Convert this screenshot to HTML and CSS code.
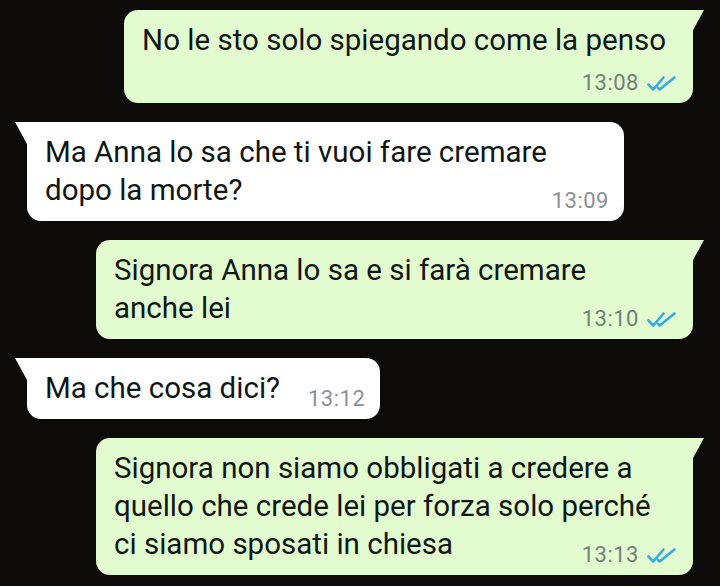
FILE: index.html
```html
<!DOCTYPE html>
<html lang="it">
<head>
    <meta charset="UTF-8">
    <meta name="viewport" content="width=device-width, initial-scale=1.0">
    <title>Chat</title>
    <link rel="stylesheet" href="styles.css">
</head>
<body>
    <div class="chat">
        <div class="bubble out">
            <p class="text">No le sto solo spiegando come la penso</p>
            <div class="meta meta-row">
                <span class="time">13:08</span>
                <svg class="ticks" viewBox="0 0 32 17"><path d="M2.5 9.5l4.8 5L17.5 2.5M12 13l1.6 1.5L28.5 2.5"/></svg>
            </div>
        </div>

        <div class="bubble in">
            <p class="text">Ma Anna lo sa che ti vuoi fare cremare dopo la morte?<span class="meta"><span class="time">13:09</span></span></p>
        </div>

        <div class="bubble out">
            <p class="text">Signora Anna lo sa e si farà cremare anche lei<span class="meta"><span class="time">13:10</span><svg class="ticks" viewBox="0 0 32 17"><path d="M2.5 9.5l4.8 5L17.5 2.5M12 13l1.6 1.5L28.5 2.5"/></svg></span></p>
        </div>

        <div class="bubble in">
            <p class="text">Ma che cosa dici?<span class="meta"><span class="time">13:12</span></span></p>
        </div>

        <div class="bubble out">
            <p class="text">Signora non siamo obbligati a credere a quello che crede lei per forza solo perché ci siamo sposati in chiesa<span class="meta"><span class="time">13:13</span><svg class="ticks" viewBox="0 0 32 17"><path d="M2.5 9.5l4.8 5L17.5 2.5M12 13l1.6 1.5L28.5 2.5"/></svg></span></p>
        </div>
    </div>
</body>
</html>
```

FILE: styles.css
```css
* {
    box-sizing: border-box;
}
body {
    margin: 0;
    background: #0c0b0a;
    font-family: Roboto, "Liberation Sans", sans-serif;
    height: 586px;
    overflow: hidden;
}
.chat {
    display: flex;
    flex-direction: column;
    gap: 19px;
    padding: 10px 27px;
}
.bubble {
    position: relative;
    display: flow-root;
    max-width: 597px;
    padding: 11px 15px 8px 18px;
    border-radius: 14px;
    color: #101613;
}
.bubble.out {
    align-self: flex-end;
    background: #e2fcd0;
    border-top-right-radius: 0;
}
.bubble.in {
    align-self: flex-start;
    background: #ffffff;
    border-top-left-radius: 0;
}
.bubble::after {
    content: "";
    position: absolute;
    top: 0;
    width: 12px;
    height: 22px;
    background: inherit;
}
.bubble.out::after {
    right: -11px;
    clip-path: polygon(0 0, 100% 0, 0 100%);
}
.bubble.in::after {
    left: -12px;
    clip-path: polygon(0 0, 100% 0, 100% 100%);
}
.text {
    margin: 0;
    padding-right: 12px;
    font-size: 29.5px;
    line-height: 38px;
}
.meta {
    float: right;
    display: inline-flex;
    align-items: center;
    gap: 7px;
    margin: 18px -12px 0 28px;
    font-size: 22px;
    line-height: 24px;
    letter-spacing: 0.5px;
}
.meta-row {
    float: none;
    display: flex;
    justify-content: flex-end;
    margin: 12px 0 0;
}
.time {
    color: #72817a;
}
.in .time {
    color: #8a9096;
}
.ticks {
    width: 32px;
    height: 17px;
    fill: none;
    stroke: #34abe8;
    stroke-width: 2.6;
    stroke-linecap: round;
    stroke-linejoin: round;
}
```
